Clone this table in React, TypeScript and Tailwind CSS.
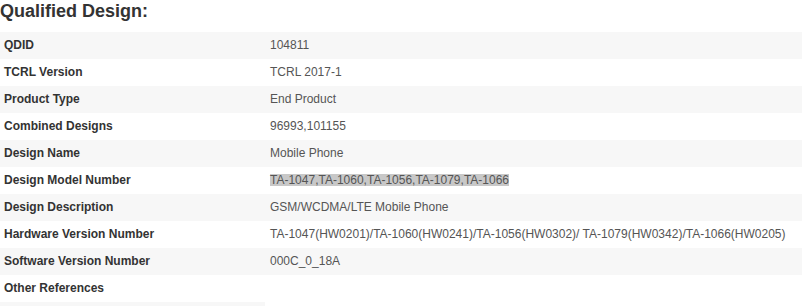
import React from 'react';

const rows: { label: string; value: React.ReactNode }[] = [
  { label: 'QDID', value: '104811' },
  { label: 'TCRL Version', value: 'TCRL 2017-1' },
  { label: 'Product Type', value: 'End Product' },
  { label: 'Combined Designs', value: '96993,101155' },
  { label: 'Design Name', value: 'Mobile Phone' },
  {
    label: 'Design Model Number',
    value: (
      <span className="inline-block h-[12px] leading-[12px] bg-[#c8c8c8]">
        TA-1047,TA-1060,TA-1056,TA-1079,TA-1066
      </span>
    ),
  },
  { label: 'Design Description', value: 'GSM/WCDMA/LTE Mobile Phone' },
  {
    label: 'Hardware Version Number',
    value: 'TA-1047(HW0201)/TA-1060(HW0241)/TA-1056(HW0302)/ TA-1079(HW0342)/TA-1066(HW0205)',
  },
  { label: 'Software Version Number', value: '000C_0_18A' },
  { label: 'Other References', value: '' },
];

export default function App() {
  return (
    <div className="w-[802px] h-[306px] overflow-hidden bg-white font-['Liberation_Sans',Arial,sans-serif]">
      <h2 className="h-[32px] text-[18px] leading-[22px] font-bold text-[#333]">Qualified Design:</h2>

      <div className="flex flex-col">
        {rows.map((row, i) => (
          <div
            key={row.label}
            className={`grid grid-cols-[266px_1fr] h-[27px] text-[12px] leading-[27px] ${
              i % 2 === 0 ? 'bg-[#f7f7f7]' : 'bg-white'
            }`}
          >
            <div className="pl-[4px] font-bold text-[#333] whitespace-nowrap">{row.label}</div>
            <div className="pl-[4px] text-[#555] whitespace-nowrap">{row.value}</div>
          </div>
        ))}
      </div>

      {/* next section starts just below the fold */}
      <div className="w-[265px] h-[8px] bg-[#f7f7f7]" />
    </div>
  );
}
